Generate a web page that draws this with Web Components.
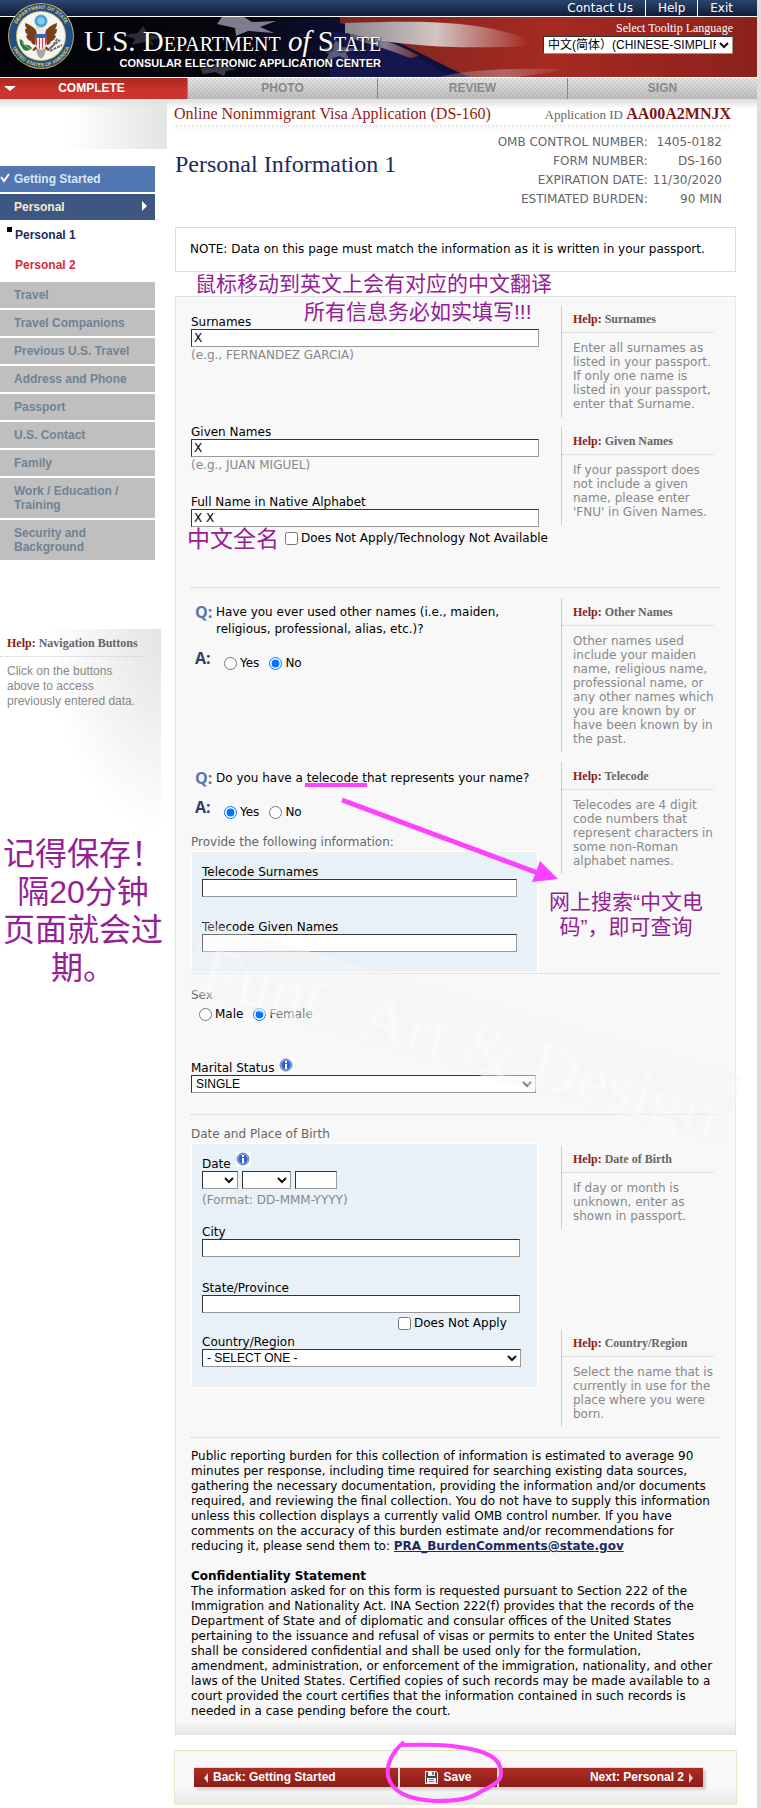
<!DOCTYPE html>
<html lang="en">
<head>
<meta charset="utf-8">
<meta name="viewport" content="width=device-width, initial-scale=1">
<title>Online Nonimmigrant Visa Application (DS-160)</title>
<style>
html,body{margin:0;padding:0;background:#fff}
body{font:12px/14px "DejaVu Sans",Verdana,"Noto Sans CJK SC",sans-serif;color:#000}
</style>
</head>
<body>
<ds-page></ds-page>
<script>
const HATCH='repeating-conic-gradient(rgba(0,0,0,.06) 0 25%,transparent 0 50%) 0 0/4px 4px';
const CHEV="url(\"data:image/svg+xml,%3Csvg xmlns='http://www.w3.org/2000/svg' width='10' height='7'%3E%3Cpath d='M1 1l4 4 4-4' fill='none' stroke='%23111' stroke-width='2'/%3E%3C/svg%3E\")";
const CONTROLS=`
*{box-sizing:border-box}
label{display:block;line-height:14px}
input[type=text],select{display:block;height:18px;margin:0;padding:0 2px;border:1px solid;border-color:#333 #999 #999 #333;border-radius:0;background:#fff;color:#000;font:12px/16px "DejaVu Sans",sans-serif}
select{appearance:none;font:12px/16px "Liberation Sans","Noto Sans CJK SC",sans-serif;padding:0 16px 0 4px;background:#fff ${CHEV} no-repeat right 3px center}
input[type=radio],input[type=checkbox]{width:13px;height:13px;margin:0;flex:none}
`;
function define(name,html,setup){
  const t=document.createElement('template');t.innerHTML=html;
  customElements.define(name,class extends HTMLElement{
    constructor(){super();this.attachShadow({mode:'open'})}
    connectedCallback(){
      if(this.shadowRoot.childNodes.length)return;
      this.shadowRoot.append(t.content.cloneNode(true));
      if(setup)setup(this,this.shadowRoot);
    }
  });
}

/* Round department seal */
define('dept-seal',`
<style>:host{display:block;width:66px;height:66px}svg{display:block;width:100%;height:100%}
text{font:bold 5px "Liberation Sans",sans-serif;fill:#e4cf62}</style>
<svg viewBox="0 0 66 66" role="img" aria-label="Department of State seal">
<defs><path id="top" d="M6 33a27 27 0 0 1 54 0"/><path id="bot" d="M2.500 33a30.500 30.500 0 0 0 61 0"/></defs>
<circle cx="33" cy="33" r="33" fill="#c9b24b"/><circle cx="33" cy="33" r="32" fill="#1f4f86"/>
<circle cx="33" cy="33" r="25" fill="#d8c569"/><circle cx="33" cy="33" r="24" fill="#f7f5f1"/>
<text text-anchor="middle"><textPath href="#top" startOffset="50%">DEPARTMENT OF STATE</textPath></text>
<text text-anchor="middle"><textPath href="#bot" startOffset="50%">UNITED STATES OF AMERICA</textPath></text>
<g fill="#7a3f19"><path d="M28 27C24 23 21 21 17 20c0 3 1 5 2 6-1 0-2 0-2 0 0 3 1 5 3 6-1 0-2 1-2 1 1 3 3 5 5 5 0 2 2 4 5 4l2-6zM38 27c4-4 7-6 11-7 0 3-1 5-2 6 1 0 2 0 2 0 0 3-1 5-3 6 1 0 2 1 2 1-1 3-3 5-5 5 0 2-2 4-5 4l-2-6z"/>
<path d="M29 42l-5 5 2 1 5-4zM37 42l5 5-2 1-5-4z"/></g>
<path d="M28 47l5-5 5 5-2 6-3 3-3-3z" fill="#a9a6a0"/>
<path d="M30 27c0-3 1-5 3-5s3 2 3 5l-1 4h-4z" fill="#efe9dd"/><path d="M30 24l-2 1 2 1z" fill="#d9a92c"/>
<path d="M27 31h12v9c0 4-3 6-6 7-3-1-6-3-6-7z" fill="#f6eef0"/>
<path d="M27 31h12v4H27z" fill="#3565b5"/>
<path d="M27 35h2v8l-1-1-1-2zM31 35h1v11l-1-1zM34 35h1v10l-1 1zM37 35h2v5l-2 3z" fill="#d8434b"/>
<circle cx="33" cy="18" r="6.500" fill="#4aa3d4"/><circle cx="33" cy="18" r="6.500" fill="none" stroke="#bfe0f0" stroke-width="1" stroke-dasharray="1 1"/><circle cx="33" cy="18" r="3.500" fill="#8cc7e6"/>
<path d="M12 36c3 1 4 4 4 6 3-1 6 0 8 3-2 3-7 4-9 1-2-3-4-6-3-10z" fill="#2d7a3a"/><path d="M14 40l8 6" stroke="#8fc48a" stroke-width="1"/>
<path d="M41 46l11-9M42 48l12-6M43 45l7-10" stroke="#6f6f72" stroke-width="2" stroke-dasharray="3 1"/>
</svg>`);

/* Top links, flag banner and language picker */
define('site-header',`
<style>${CONTROLS}
:host{display:block;position:relative}
nav{height:16px;display:flex;justify-content:flex-end;padding-right:24px;background:${HATCH},linear-gradient(#2d466f,#101e3c)}
nav a{color:#fff;text-decoration:none;line-height:16px;padding:0 12px;border-left:1px solid #fff}
nav a:first-child{border:0}nav a:last-child{padding-right:0}
.banner{position:relative;margin:1px 0;height:60px;display:flex;justify-content:space-between;background:#06060f;overflow:hidden}
.flag{position:absolute;inset:0;width:100%;height:100%}
.name{position:relative;margin-left:84px;color:#fff;text-shadow:1px 1px 2px #000;width:297px}
h1{margin:8px 0 0;font:29px/32px "Liberation Serif",serif;font-variant:small-caps;white-space:nowrap}
h1 i{font-variant:normal}
p{margin:0;text-align:right;font:bold 11px/12px "Liberation Sans",sans-serif;white-space:nowrap}
.lang{position:relative;width:190px;margin:4px 24px 0 0;color:#fff}
.lang label{text-align:right;font:12px/15px "Liberation Serif",serif}
.lang select{width:100%}
dept-seal{position:absolute;left:8px;top:3px}
</style>
<nav aria-label="Site"><a href="#contact">Contact Us</a><a href="#help">Help</a><a href="#exit">Exit</a></nav>
<div class="banner">
<svg class="flag" viewBox="0 0 757 60" preserveAspectRatio="none" aria-hidden="true">
<defs><linearGradient id="n"><stop offset="0" stop-color="#020208"/><stop offset=".3" stop-color="#06060f"/><stop offset=".5" stop-color="#10103c"/><stop offset="1" stop-color="#12124a"/></linearGradient>
<linearGradient id="r"><stop offset="0" stop-color="#7d2420"/><stop offset=".5" stop-color="#a52a22"/><stop offset="1" stop-color="#8c211b"/></linearGradient>
<linearGradient id="w"><stop offset="0" stop-color="#8d8790"/><stop offset=".5" stop-color="#d2c4c2"/><stop offset="1" stop-color="#a52a22"/></linearGradient></defs>
<path fill="url(#n)" d="M0 0h757v60H0z"/>
<path fill="url(#r)" d="M340 0h417v60H470C430 44 400 20 340 6z"/>
<path fill="url(#w)" d="M345 6C410 4 470 2 522 20c14 8 2 10-20 10-50 1-90 0-157-12z"/>
<path fill="#15164d" d="M330 14c50 4 90 28 123 46H330z"/>
<path fill="url(#w)" d="M350 17c36 4 50 12 70 22l-10 2c-20-8-40-14-60-20z" opacity=".6"/>
<path fill="url(#w)" d="M440 60c30-7 60-9 130-8l-50 8z" opacity=".4"/>
<g fill="#8b8b9c"><path d="M222 0h22l8 5 24-1-16 6 14 6-26-2-12 5-1-8-18-4z" opacity=".9"/><path d="M124 18l14-2 5-7 5 8 16 3-13 3 3 6-10-4-12 3 3-6z" opacity=".3"/><path d="M320 32l12-2 4-7 6 7 14 2-10 4 4 8-11-5-14 5 4-7z" opacity=".6"/><path d="M200 50l16-3 6-5 3 7 12 3-11 2-2 5-9-4-12 2z" opacity=".4"/></g>
</svg>
<div class="name"><h1>U.S. Department <i>of</i> State</h1><p>CONSULAR ELECTRONIC APPLICATION CENTER</p></div>
<div class="lang"><label for="lang">Select Tooltip Language</label><select id="lang"><option>中文(简体）(CHINESE-SIMPLIFIED)</option><option>ENGLISH</option></select></div>
</div>
<dept-seal></dept-seal>`);

define('step-tabs',`
<style>
:host{display:block}
ol{display:grid;grid-template-columns:187fr 190fr 190fr 190fr;margin:0;padding:0;list-style:none}
li{height:21px;text-align:center;font:bold 12px/20px "Liberation Sans",sans-serif;color:#888;background:${HATCH},linear-gradient(#e6e6e6,#bdbdbd);border-left:1px solid #888}
li:first-child{position:relative;color:#fff;background:${HATCH},linear-gradient(#b02820,#d0362f 60%);border:0;padding-right:4px}
li:first-child::before{content:"";position:absolute;left:4px;top:8px;border:6px solid transparent;border-top:5px solid #fff;border-bottom:0}
</style>
<ol><li aria-current="step">COMPLETE</li><li>PHOTO</li><li>REVIEW</li><li>SIGN</li></ol>`);

/* Help panel; variant "nav" sits under the side menu */
define('help-note',`
<style>
:host{display:block;border-left:1px solid #ccc;padding-bottom:6px;color:#888}
h3{margin:0 5px 8px 0;padding:7px 0 6px 11px;font:bold 12px/14px "Liberation Serif",serif;color:#666;border-bottom:1px dotted #ccc}
b{color:#8f1d14}
div{padding-left:11px}
:host([variant=nav]){border:0;width:161px;box-sizing:border-box;min-height:206px;background:radial-gradient(ellipse 75% 100% at 105% 0,#e2e2e2,transparent)}
:host([variant=nav]) h3{margin:0 17px 7px 0;padding-left:7px}
:host([variant=nav]) div{padding:0 20px 0 7px;font:12px/15px "Liberation Sans",sans-serif}
</style>
<h3><b>Help:</b> <span></span></h3><div><slot></slot></div>`,
(h,r)=>{r.querySelector('span').textContent=h.getAttribute('topic')});

define('side-menu',`
<style>
:host{display:block;font:bold 12px/14px "Liberation Sans",sans-serif}
.shade{width:167px;height:50px;background:linear-gradient(90deg,transparent 40%,#e4e4e4)}
ul{list-style:none;margin:17px 0 0;padding:0;width:155px;display:grid;gap:2px}
a{display:block;padding:6px 20px 6px 14px;text-decoration:none;background:#bfbfbf;color:#708295}
.done{position:relative;background:#5176b2;color:#d8e6f8}
.done svg{position:absolute;left:0;top:7px;width:10px;height:10px}
.now{position:relative;background:#3d5682;color:#f5ecd2}
.now::after{content:"";position:absolute;right:8px;top:7px;border:5px solid transparent;border-left-color:#fff;border-right:0}
.sub{background:none;color:#1b2a60;padding:6px 0 8px 15px;position:relative}
.sub.here::before{content:"";position:absolute;left:7px;top:5px;width:5px;height:5px;background:#000}
.sub.next{color:#d52b3a;padding-top:8px}
help-note{margin-top:69px}
</style>
<div class="shade"></div>
<ul>
<li><a class="done" href="#start"><svg viewBox="0 0 10 10"><path d="M1 4l3 4 5-7" fill="none" stroke="#fff" stroke-width="2"/></svg>Getting Started</a></li>
<li><a class="now" href="#personal">Personal</a></li>
<li><a class="sub here" href="#p1">Personal 1</a><a class="sub next" href="#p2">Personal 2</a></li>
<li><a href="#travel">Travel</a></li><li><a href="#companions">Travel Companions</a></li><li><a href="#previous">Previous U.S. Travel</a></li>
<li><a href="#address">Address and Phone</a></li><li><a href="#passport">Passport</a></li><li><a href="#contact">U.S. Contact</a></li>
<li><a href="#family">Family</a></li><li><a href="#work">Work / Education / Training</a></li><li><a href="#security">Security and Background</a></li>
</ul>
<help-note variant="nav" topic="Navigation Buttons">Click on the buttons above to access previously entered data.</help-note>`);

define('page-title',`
<style>
:host{display:block}
.bar{display:flex;justify-content:space-between;align-items:baseline;padding:4px 5px 0 0;height:22px;box-sizing:content-box;font:13px/22px "Liberation Serif",serif;color:#666}
.bar span:first-child{font-size:16px;color:#8f1d14}
.bar b{font-size:16px;color:#7d1414}
.hatch{height:7px;margin-right:5px;border-top:1px dotted #ddd;background:linear-gradient(transparent,#fff),${HATCH}}
.row{display:flex;justify-content:space-between;padding:0 14px 0 1px}
h2{margin:17px 0 0;font:24px/28px "Liberation Serif",serif;color:#1b2a60}
table{border-spacing:0;color:#666;text-align:right}
th{font-weight:400;text-align:right}
td,th{padding:0;line-height:19px}td{padding-left:5px}
</style>
<div class="bar"><span>Online Nonimmigrant Visa Application (DS-160)</span><span>Application ID <b>AA00A2MNJX</b></span></div>
<div class="hatch"></div>
<div class="row"><h2>Personal Information 1</h2>
<table><tr><th>OMB CONTROL NUMBER:</th><td>1405-0182</td></tr><tr><th>FORM NUMBER:</th><td>DS-160</td></tr><tr><th>EXPIRATION DATE:</th><td>11/30/2020</td></tr><tr><th>ESTIMATED BURDEN:</th><td>90 MIN</td></tr></table></div>`);

/* A band of the form: fields on the left, help on the right */
define('form-section',`
<style>
:host{display:grid;grid-template-columns:minmax(0,1fr) 158px;margin:0 16px 0 15px;border-bottom:1px dotted #ccc}
.help{display:flex;flex-direction:column;gap:10px;padding:var(--help-top,10px) 0 10px}
.help ::slotted(.low){margin-top:90px}
</style>
<div><slot></slot></div><div class="help"><slot name="help"></slot></div>`);

define('text-field',`
<style>${CONTROLS}
:host{display:block}
input{width:var(--field,348px)!important;max-width:100%}
small{display:block;font-size:12px;color:#888;padding-top:1px}
small:empty{display:none}
</style>
<label for="f"></label><input id="f" type="text"><small></small>`,
(h,r)=>{r.querySelector('label').textContent=h.getAttribute('label');r.querySelector('input').value=h.getAttribute('value')||'';r.querySelector('small').textContent=h.getAttribute('hint')||''});

define('info-icon',`
<style>:host{display:inline-block;width:15px;height:15px}svg{display:block}</style>
<svg width="15" height="15" viewBox="0 0 15 15" aria-hidden="true"><path fill="#fff" d="M0 0h15v15H0z"/><circle cx="7" cy="7" r="6" fill="#8fb0ee" stroke="#6d7fb4"/><circle cx="7" cy="7" r="4.500" fill="#2f62d8"/><path fill="#fff" d="M6 3h2v2H6zM6 6h2v5H6z"/></svg>`);

define('select-field',`
<style>${CONTROLS}
:host{display:block}
label{display:flex;gap:5px}info-icon{margin-top:-3px;height:15px;margin-bottom:-3px}
select{width:var(--field,345px);max-width:100%}
</style>
<label for="f"><span></span></label><select id="f"><option></option></select>`,
(h,r)=>{r.querySelector('span').textContent=h.getAttribute('label');r.querySelector('option').textContent=h.getAttribute('value');
if(h.hasAttribute('info'))r.querySelector('label').append(document.createElement('info-icon'))});

define('check-field',`
<style>${CONTROLS}:host{display:block}
label{display:flex;gap:3px;align-items:center;line-height:17px;white-space:nowrap}</style>
<label><input type="checkbox"><slot></slot></label>`);

define('radio-pair',`
<style>${CONTROLS}:host{display:flex;gap:10px}
label{display:flex;gap:3px;align-items:center;line-height:17px}</style>
<label><input type="radio" name="g"><span></span></label><label><input type="radio" name="g"><span></span></label>`,
(h,r)=>{const o=h.getAttribute('options').split(',');const p=h.getAttribute('picked');
r.querySelectorAll('label').forEach((l,i)=>{l.querySelector('span').textContent=o[i];l.querySelector('input').checked=o[i]===p})});

define('question-block',`
<style>
:host{display:grid;grid-template-columns:21px 1fr;padding-left:4px;line-height:17px;row-gap:12px}
b{font:bold 16px/17px "Open Sans","Noto Sans",sans-serif;color:#5577b0}
b.a{color:#2f4168}
.answer{padding:5px 0 0 8px}
.q{padding-right:12px}
</style>
<b>Q:</b><div class="q"><slot></slot></div><b class="a">A:</b><div class="answer"><slot name="answer"></slot></div>`);

define('blue-panel',`
<style>:host{display:block;width:347px;max-width:100%;box-sizing:border-box;border:1px solid #fff;background:#e9f1f8;padding:13px 10px 20px}</style><slot></slot>`);

define('date-field',`
<style>${CONTROLS}:host{display:block}
legend{padding:0;display:flex;gap:5px}info-icon{margin-top:-5px;margin-bottom:-5px}
fieldset{border:0;margin:0;padding:0}
.row{display:flex;gap:4px}
#d{width:36px}#m{width:49px}#y{width:42px}
small{display:block;font-size:12px;color:#888;padding-top:4px}
</style>
<fieldset><legend>Date <info-icon></info-icon></legend>
<div class="row"><select id="d" aria-label="Day"><option></option></select><select id="m" aria-label="Month"><option></option></select><input id="y" type="text" aria-label="Year"></div></fieldset>
<small>(Format: DD-MMM-YYYY)</small>`);

define('action-bar',`
<style>
:host{display:block;border:1px dotted #ddd5c0;padding:16px 33px 17px 19px;background:linear-gradient(#f8f8f8 70%,#e8e8e8)}
div{display:grid;grid-template-columns:204fr 97fr 204fr;gap:2px;box-shadow:3px 3px 2px #d6d2d2;background:#ddd;border-top:1px solid #ddd}
button{display:flex;align-items:center;gap:5px;height:19px;border:0;margin:0;padding:0 10px;background:linear-gradient(#ad2c24,#8a1d17);color:#fff;font:bold 12px/19px "Liberation Sans",sans-serif}
button:nth-child(2){justify-content:center}
button:nth-child(3){justify-content:flex-end}
i{border:4px solid transparent;border-top-width:5px;border-bottom-width:5px}
.l{border-right-color:#e8d6c8;border-left:0}.r{border-left-color:#e8d6c8;border-right:0}
</style>
<div><button type="button"><i class="l"></i>Back: Getting Started</button>
<button type="button"><svg width="13" height="13" viewBox="0 0 13 13" aria-hidden="true"><path fill="#eee" d="M0 0h11l2 2v11H0z"/><path fill="#444" d="M1 1h2v4h7V1h1l1 1v10h-1V7H2v5H1z"/><path fill="#777" d="M7 1h2v3H7zM4 8h5v1H4zM4 10h5v1H4z"/></svg>Save</button>
<button type="button">Next: Personal 2<i class="r"></i></button></div>`);

/* Handwritten-style remarks and marks drawn over the page */
define('remark-layer',`
<style>
:host{position:absolute;inset:0;overflow:hidden;pointer-events:none;color:#942193;font-family:"Liberation Sans","Noto Sans CJK SC",sans-serif}
p{position:absolute;margin:0;white-space:nowrap}
.hover{left:195px;top:270px;font-size:21px;line-height:28px}
.truth{left:304px;top:298px;font-size:21px;line-height:28px}
.native{left:187px;top:525px;font-size:23px;line-height:28px}
.code{left:549px;top:889px;font-size:21px;line-height:25px;width:154px;text-align:center}
.save{left:3px;top:835px;font-size:32px;line-height:38px;width:160px;text-align:center}
.mark{left:183px;top:997px;width:560px;height:72px;transform:rotate(16deg);text-align:center;font:68px/90px "Liberation Serif",serif;color:rgba(255,255,255,.35);background:linear-gradient(90deg,rgba(245,245,245,.3),rgba(245,245,245,.5) 15%)}
svg{position:absolute;left:0;top:0;width:757px;height:1808px}
</style>
<p class="mark">FunC Art &amp; Design</p>
<svg viewBox="0 0 757 1808" fill="none" stroke="#ff40ff" aria-hidden="true">
<path d="M305 785h62" stroke-width="4"/><path d="M342 800l196 73" stroke-width="5"/><path d="M540 861l18 18-26 3z" fill="#ff40ff" stroke="none"/>
<path d="M404 1742C392 1752 386 1765 388 1776c4 18 24 24 48 25 22 0 34-2 46-10 14-7 20-11 19-20-1-12-12-18-30-22-16-4-40-5-70-4" stroke-width="4"/>
</svg>
<p class="hover" lang="zh">鼠标移动到英文上会有对应的中文翻译</p>
<p class="truth" lang="zh">所有信息务必如实填写!!!</p>
<p class="native" lang="zh">中文全名</p>
<p class="code" lang="zh">网上搜索“中文电<br>码”，即可查询</p>
<p class="save" lang="zh">记得保存！<br>隔20分钟<br>页面就会过<br>期。</p>`);

define('ds-page',`
<style>
:host{display:block;position:relative;min-height:100vh;box-sizing:border-box;border-right:4px solid #ddd}
.cols{display:grid;grid-template-columns:174px minmax(0,1fr);background:linear-gradient(#ddd,transparent 10px)}
main{padding-right:21px}
.note{margin:18px 0 24px 1px;border:1px solid #ddd;padding:14px;line-height:15px;background:#fff}
form{margin:0 0 0 1px;border:1px dotted #ddd5c0;background:linear-gradient(to top,#e6e6e6,#f8f8f8 12px)}
.legal{margin:0 15px;padding:11px 0 15px;line-height:15px}
.legal p{margin:0 0 15px}
.legal h3{margin:0;font:inherit;font-weight:700}
.legal a{color:#1b2a60;font-weight:700}
action-bar{margin:15px -1px 5px 0}
.g{color:#666}
.s1{--help-top:8px}
.sur{margin-top:18px}.giv{margin-top:63px}.nat{margin-top:23px}
.na{margin:3px 0 40px 94px}
.q1{margin-top:16px}.q2{margin-top:98px}
.prov{margin-top:14px;margin-bottom:2px}
.tel{--field:315px}.tel+.tel{margin-top:23px}
.sex{margin-top:14px}.rad{margin:4px 0 0 8px}.mar{margin:38px 0 21px}
.s3{--help-top:0}
.born{margin-top:12px;margin-bottom:2px}.s4{--help-top:30px}
.place{--field:318px}.city{margin-top:18px}.state{margin-top:24px}
.na2{margin:2px 0 3px 196px}
.place select-field{--field:319px}
</style>
<site-header></site-header><step-tabs></step-tabs>
<div class="cols">
<side-menu></side-menu>
<main>
<page-title></page-title>
<div class="note">NOTE: Data on this page must match the information as it is written in your passport.</div>
<form>
<form-section class="s1">
<text-field class="sur" label="Surnames" value="X" hint="(e.g., FERNANDEZ GARCIA)"></text-field>
<text-field class="giv" label="Given Names" value="X" hint="(e.g., JUAN MIGUEL)"></text-field>
<text-field class="nat" label="Full Name in Native Alphabet" value="X X"></text-field>
<check-field class="na">Does Not Apply/Technology Not Available</check-field>
<help-note slot="help" topic="Surnames">Enter all surnames as listed in your passport. If only one name is listed in your passport, enter that Surname.</help-note>
<help-note slot="help" topic="Given Names">If your passport does not include a given name, please enter 'FNU' in Given Names.</help-note>
</form-section>
<form-section>
<question-block class="q1">Have you ever used other names (i.e., maiden, religious, professional, alias, etc.)?<radio-pair slot="answer" options="Yes,No" picked="No"></radio-pair></question-block>
<question-block class="q2">Do you have a telecode that represents your name?<radio-pair slot="answer" options="Yes,No" picked="Yes"></radio-pair></question-block>
<div class="g prov">Provide the following information:</div>
<blue-panel><text-field class="tel" label="Telecode Surnames"></text-field><text-field class="tel" label="Telecode Given Names"></text-field></blue-panel>
<help-note slot="help" topic="Other Names">Other names used include your maiden name, religious name, professional name, or any other names which you are known by or have been known by in the past.</help-note>
<help-note slot="help" topic="Telecode">Telecodes are 4 digit code numbers that represent characters in some non-Roman alphabet names.</help-note>
</form-section>
<form-section class="s3">
<div class="g sex">Sex</div>
<radio-pair class="rad" options="Male,Female" picked="Female"></radio-pair>
<select-field class="mar" label="Marital Status" value="SINGLE" info></select-field>
</form-section>
<form-section class="s4">
<div class="g born">Date and Place of Birth</div>
<blue-panel class="place"><date-field></date-field>
<text-field class="city" label="City"></text-field>
<text-field class="state" label="State/Province"></text-field>
<check-field class="na2">Does Not Apply</check-field>
<select-field label="Country/Region" value="- SELECT ONE -"></select-field></blue-panel>
<help-note slot="help" topic="Date of Birth">If day or month is unknown, enter as shown in passport.</help-note>
<help-note slot="help" class="low" topic="Country/Region">Select the name that is currently in use for the place where you were born.</help-note>
</form-section>
<div class="legal">
<p>Public reporting burden for this collection of information is estimated to average 90 minutes per response, including time required for searching existing data sources, gathering the necessary documentation, providing the information and/or documents required, and reviewing the final collection. You do not have to supply this information unless this collection displays a currently valid OMB control number. If you have comments on the accuracy of this burden estimate and/or recommendations for reducing it, please send them to: <a href="mailto:PRA_BurdenComments@state.gov">PRA_BurdenComments@state.gov</a></p>
<h3>Confidentiality Statement</h3>
<div>The information asked for on this form is requested pursuant to Section 222 of the Immigration and Nationality Act. INA Section 222(f) provides that the records of the Department of State and of diplomatic and consular offices of the United States pertaining to the issuance and refusal of visas or permits to enter the United States shall be considered confidential and shall be used only for the formulation, amendment, administration, or enforcement of the immigration, nationality, and other laws of the United States. Certified copies of such records may be made available to a court provided the court certifies that the information contained in such records is needed in a case pending before the court.</div>
</div>
</form>
<action-bar></action-bar>
</main>
</div>
<remark-layer></remark-layer>`);
</script>
</body>
</html>
